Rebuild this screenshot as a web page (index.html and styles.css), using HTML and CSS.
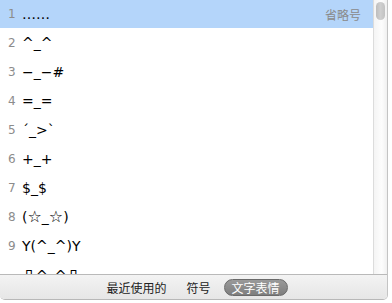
FILE: index.html
```html
<!DOCTYPE html>
<html lang="zh-CN">
  <head>
    <meta charset="UTF-8" />
    <title>文字表情</title>
    <link rel="stylesheet" href="styles.css">
  </head>
  <body>
    <div class="panel">
      <div class="content">
        <div class="list">
          <div class="row selected"><span class="num">1</span><span class="txt">……</span><span class="hint">省略号</span></div>
          <div class="row"><span class="num">2</span><span class="txt">^_^</span></div>
          <div class="row"><span class="num">3</span><span class="txt">−_−#</span></div>
          <div class="row"><span class="num">4</span><span class="txt">=_=</span></div>
          <div class="row"><span class="num">5</span><span class="txt">´_&gt;`</span></div>
          <div class="row"><span class="num">6</span><span class="txt">+_+</span></div>
          <div class="row"><span class="num">7</span><span class="txt">$_$</span></div>
          <div class="row"><span class="num">8</span><span class="txt">(<span class="star">☆</span>_<span class="star">☆</span>)</span></div>
          <div class="row"><span class="num">9</span><span class="txt">Y(^_^)Y</span></div>
          <div class="row"><span class="num"></span><span class="txt"><span class="cjk">凸</span>^_^<span class="cjk">凸</span></span></div>
        </div>
        <div class="scroll"><div class="thumb"></div></div>
      </div>
      <div class="footer">
        <span class="tab">最近使用的</span>
        <span class="tab">符号</span>
        <span class="tab active">文字表情</span>
      </div>
    </div>
  </body>
</html>
```
FILE: styles.css
```css
body,
html {
  margin: 0;
  background-color: #fff;
  font-family: "DejaVu Sans", "Noto Sans CJK SC", sans-serif;
}
.panel {
  width: 388px;
  height: 300px;
  border-right: 1px solid #c4c4c4;
  border-bottom: 1px solid #b8b8b8;
  border-radius: 0 0 5px 5px;
  overflow: hidden;
  display: flex;
  flex-direction: column;
  box-sizing: border-box;
}
.content {
  flex: 1;
  display: flex;
  min-height: 0;
}
.list {
  flex: 1;
  overflow: hidden;
}
.row {
  height: 29px;
  display: flex;
  align-items: center;
  box-sizing: border-box;
  padding-bottom: 1px;
}
.row.selected {
  background-color: #b4d5fa;
  height: 28px;
  margin-bottom: 1px;
  padding-bottom: 0;
}
.num {
  width: 14px;
  padding-left: 8px;
  font-size: 12px;
  color: #8c8c8c;
}
.txt {
  font-size: 14px;
  color: #000;
  flex: 1;
}
.cjk {
  font-family: "Noto Sans CJK SC", sans-serif;
}
.star {
  font-size: 16px;
  line-height: 14px;
}
.hint {
  font-family: "Noto Sans CJK SC", sans-serif;
  font-size: 12px;
  color: #8a8a8a;
  padding-right: 12px;
}
.scroll {
  width: 13px;
  border-left: 1px solid #dcdcdc;
  background: linear-gradient(to right, #f4f4f4, #fdfdfd 60%, #f0f0f0);
  padding-top: 2px;
}
.thumb {
  width: 9px;
  height: 18px;
  margin-left: 2px;
  border-radius: 5px;
  background: linear-gradient(to right, #bdbdbd, #cfcfcf 50%, #c2c2c2);
}
.footer {
  height: 25px;
  border-top: 1px solid #b9b9b9;
  background: linear-gradient(#f3f3f3, #e6e6e6);
  display: flex;
  justify-content: center;
  align-items: center;
  gap: 6px;
  flex-shrink: 0;
  padding-top: 1px;
  box-sizing: border-box;
}
.tab {
  font-family: "Noto Sans CJK SC", sans-serif;
  font-size: 12px;
  color: #222;
  padding: 0 7px;
  line-height: 15px;
}
.tab.active {
  color: #fff;
  background: linear-gradient(#9a9a9a, #7e7e7e);
  border: 1px solid #6a6a6a;
  border-radius: 9px;
  padding: 0 7px;
}
```
